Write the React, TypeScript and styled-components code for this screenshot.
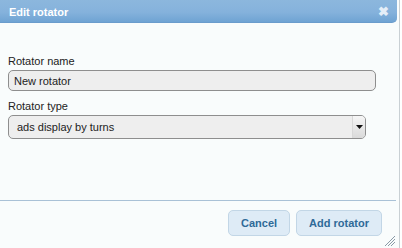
import React from "react";
import styled, { createGlobalStyle } from "styled-components";

const Global = createGlobalStyle`
  html, body { margin: 0; padding: 0; background: #ffffff; }
  body { width: 402px; height: 248px; overflow: hidden; font-family: "Liberation Sans", Arial, sans-serif; }
`;

const Page = styled.div`
  display: flex;
  width: 402px;
  height: 248px;
  background: #ffffff;
`;

const Dialog = styled.div`
  position: relative;
  width: 400px;
  height: 248px;
  display: flex;
  flex-direction: column;
  background: #f9fcfc;
  border-right: 1px solid #c9d0d4;
  box-sizing: border-box;
`;

const TitleBar = styled.div`
  height: 23px;
  margin-right: 2px;
  display: flex;
  align-items: center;
  justify-content: space-between;
  padding: 0 8px 0 9px;
  border-bottom-right-radius: 5px;
  background: linear-gradient(to bottom, #8cb7dd 0%, #85b2dc 55%, #6fa3d3 100%);
  border-bottom: 1px solid #6a9ccc;
  box-sizing: border-box;
`;

const Title = styled.span`
  color: #ffffff;
  font-weight: bold;
  font-size: 11px;
  margin-top: 1px;
`;

const Close = styled.span`
  color: #e4eef8;
  font-weight: bold;
  font-size: 13px;
  line-height: 1;
`;

const Body = styled.div`
  flex: 1;
  display: flex;
  flex-direction: column;
  padding: 32px 0 0 8px;
`;

const Label = styled.label`
  display: block;
  font-size: 11px;
  color: #222;
  line-height: 13px;
  margin-bottom: 2px;
`;

const Field = styled.div<{ $width: number; $height: number; $pad: number }>`
  width: ${(p) => p.$width}px;
  height: ${(p) => p.$height}px;
  box-sizing: border-box;
  border: 1px solid #8e8e8e;
  border-radius: 5px;
  background: #eeeeee;
  display: flex;
  align-items: center;
  justify-content: space-between;
  padding-left: ${(p) => p.$pad}px;
  font-size: 11px;
  color: #222;
  margin-bottom: 9px;
`;

const Arrow = styled.div`
  width: 12px;
  height: 100%;
  display: flex;
  align-items: center;
  justify-content: center;
  border-left: 1px solid #d8d8d8;
  background: linear-gradient(to bottom, #f6f6f6, #dadada);
  border-radius: 0 4px 4px 0;
`;

const Separator = styled.div`
  height: 1px;
  background: #a9c1d6;
  margin-right: 3px;
`;

const Footer = styled.div`
  height: 47px;
  display: flex;
  justify-content: flex-end;
  align-items: flex-start;
  gap: 6px;
  padding: 9px 17px 0 0;
  box-sizing: border-box;
`;

const Button = styled.button`
  height: 26px;
  padding: 0 12px;
  border: 1px solid #c2d6e6;
  border-radius: 5px;
  background: #deebf6;
  color: #2f6a98;
  font-family: "Liberation Sans", Arial, sans-serif;
  font-weight: bold;
  font-size: 11px;
`;

const Grip = styled.svg`
  position: absolute;
  right: 3px;
  bottom: 1px;
`;

export default function App() {
  return (
    <>
      <Global />
      <Page>
        <Dialog>
          <TitleBar>
            <Title>Edit rotator</Title>
            <Close>✖</Close>
          </TitleBar>
          <Body>
            <Label>Rotator name</Label>
            <Field $width={368} $height={21} $pad={5}>New rotator</Field>
            <Label>Rotator type</Label>
            <Field $width={358} $height={24} $pad={8}>
              ads display by turns
              <Arrow>
                <svg width="7" height="4" viewBox="0 0 7 4">
                  <path d="M0 0h7L3.5 4z" fill="#111" />
                </svg>
              </Arrow>
            </Field>
          </Body>
          <Separator />
          <Footer>
            <Button>Cancel</Button>
            <Button>Add rotator</Button>
          </Footer>
          <Grip width="12" height="12" viewBox="0 0 12 12">
            <path d="M11 1L1 11M11 4L4 11M11 7L7 11" stroke="#8a9aa6" strokeWidth="1" />
          </Grip>
        </Dialog>
      </Page>
    </>
  );
}
